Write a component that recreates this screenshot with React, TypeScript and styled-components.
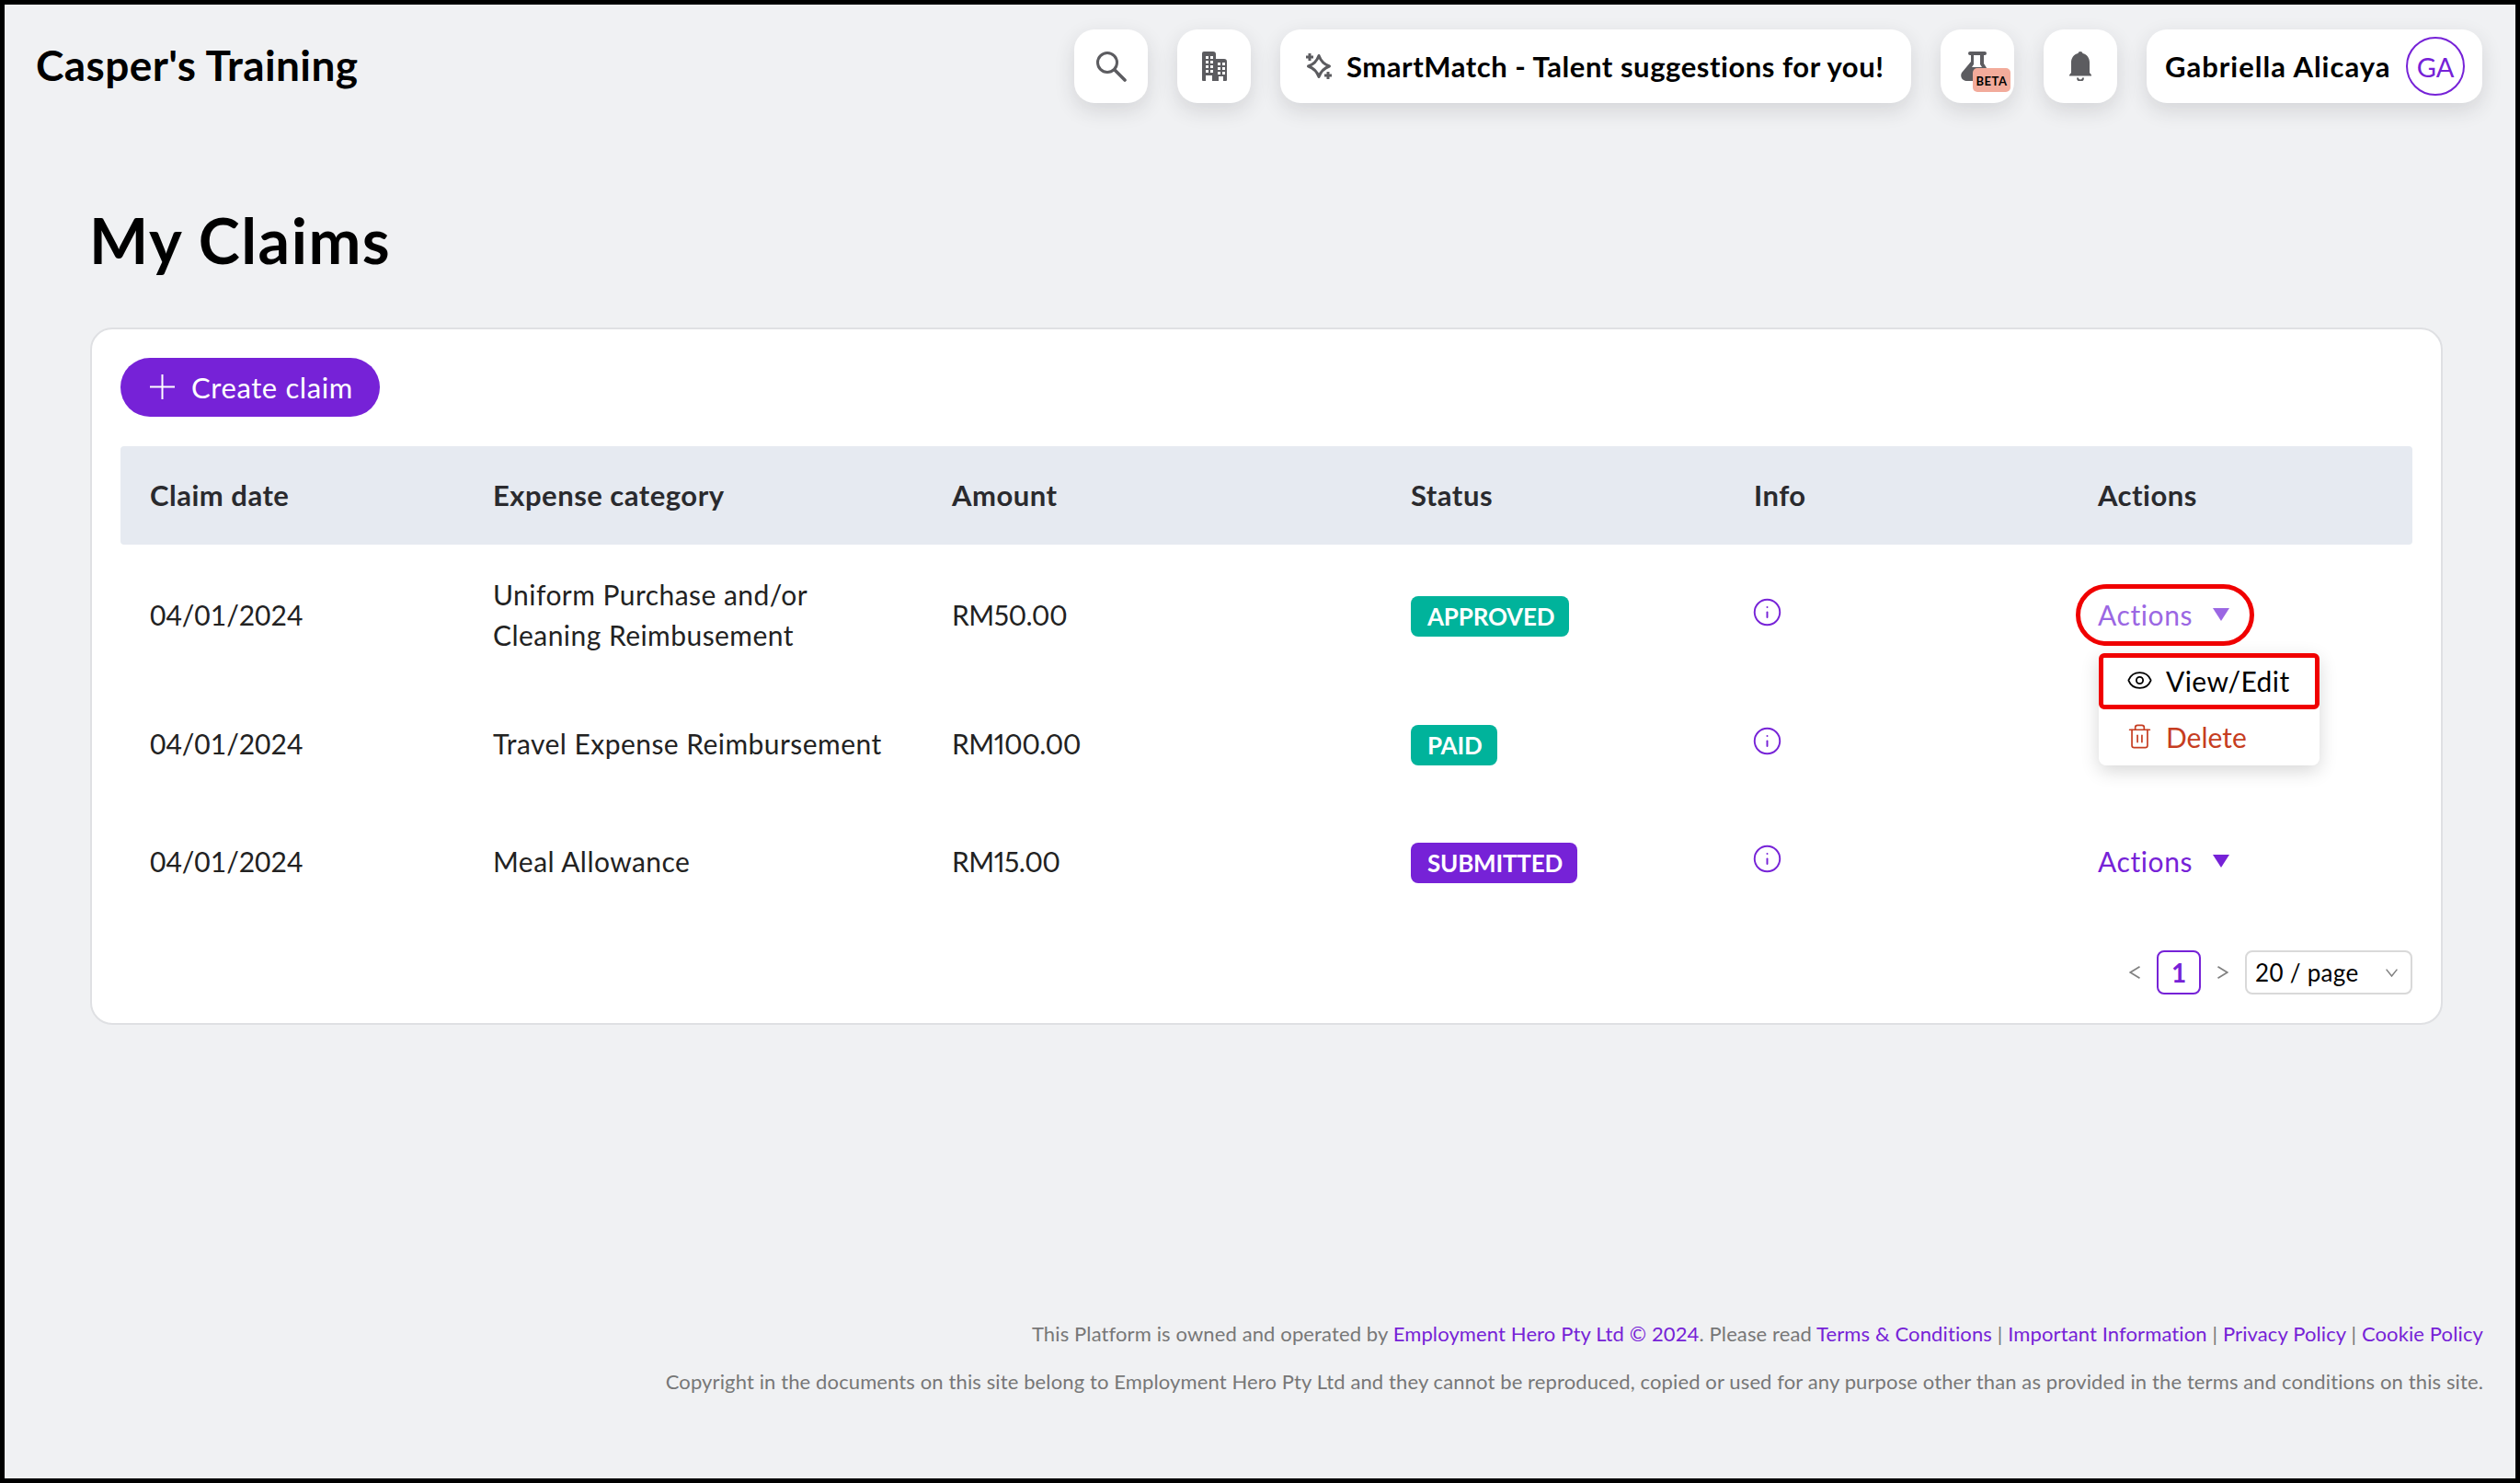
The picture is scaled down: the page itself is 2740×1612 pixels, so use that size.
import React from "react";
import styled, { createGlobalStyle } from "styled-components";
import { Eye, Info, Trash2 } from "lucide-react";

const PURPLE = "#7622d7";
const ICON_GREY = "#5c5c60";

type Claim = {
  date: string;
  category: React.ReactNode;
  amount: string;
  status: string;
  tone: "green" | "purple";
  actions: "open" | "closed" | "hidden";
};

const claims: Claim[] = [
  {
    date: "04/01/2024",
    category: (
      <>
        Uniform Purchase and/or
        <br />
        Cleaning Reimbusement
      </>
    ),
    amount: "RM50.00",
    status: "APPROVED",
    tone: "green",
    actions: "open",
  },
  {
    date: "04/01/2024",
    category: "Travel Expense Reimbursement",
    amount: "RM100.00",
    status: "PAID",
    tone: "green",
    actions: "hidden",
  },
  {
    date: "04/01/2024",
    category: "Meal Allowance",
    amount: "RM15.00",
    status: "SUBMITTED",
    tone: "purple",
    actions: "closed",
  },
];

const SearchIcon = () => (
  <svg width="34" height="34" viewBox="0 0 34 34" fill="none">
    <circle cx="13" cy="13" r="10.5" stroke={ICON_GREY} strokeWidth="3" />
    <path d="M21 21l11 11" stroke={ICON_GREY} strokeWidth="3.6" strokeLinecap="round" />
  </svg>
);

const BuildingIcon = () => (
  <svg width="27" height="32" viewBox="0 0 27 32">
    <path
      fillRule="evenodd"
      fill={ICON_GREY}
      d="M2 0h10a3 3 0 0 1 3 3v5h9a3 3 0 0 1 3 3v20a1 1 0 0 1-1 1H1a1 1 0 0 1-1-1V2a2 2 0 0 1 2-2zM4 5v3h3V5zM9 5v3h3V5zM4 10v3h3v-3zM9 10v3h3v-3zM4 15v3h3v-3zM9 15v3h3v-3zM4 20v3h3v-3zM9 20v3h3v-3zM4 26v6h7v-6zM17 12v3h3v-3zM22 12v3h3v-3zM17 17v3h3v-3zM22 17v3h3v-3zM17 22v3h3v-3zM22 22v3h3v-3zM18 27v5h5v-5z"
    />
  </svg>
);

const SparkIcon = () => (
  <svg width="28" height="28" viewBox="0 0 28 28" fill="none">
    <path
      d="M14 2.500Q17 11 25.500 14Q17 17 14 25.500Q11 17 2.500 14Q11 11 14 2.500z"
      stroke={ICON_GREY}
      strokeWidth="3"
      strokeLinejoin="round"
    />
    <path d="M4 0v8M0 4h8M24 20v8M20 24h8" stroke={ICON_GREY} strokeWidth="3" />
  </svg>
);

const FlaskIcon = () => (
  <svg width="30" height="32" viewBox="0 0 30 32">
    <path
      fill={ICON_GREY}
      d="M10 0h16a2 2 0 0 1 0 4h-1v9l5 8v11H6a6 6 0 0 1-5-9l10-12V4h-1a2 2 0 0 1 0-4z"
    />
    <path fill="#fff" d="M14 4h7v10l2 3H12l2-3z" />
  </svg>
);

const BellIcon = () => (
  <svg width="24" height="32" viewBox="0 0 24 32">
    <path
      fill={ICON_GREY}
      d="M12 0c1.400 0 2.300 0.800 2.500 2c4.600 1.100 7.500 4.900 7.500 10v11l2 2.500v1H0v-1l2-2.500V12C2 6.900 4.900 3.100 9.500 2C9.700 0.800 10.600 0 12 0z"
    />
    <path fill="none" stroke={ICON_GREY} strokeWidth="2" d="M9 28.500a3 3 0 0 0 6 0" />
  </svg>
);

const PlusIcon = () => (
  <svg width="27" height="27" viewBox="0 0 27 27" fill="none">
    <path d="M13.500 0v27M0 13.500h27" stroke="#fff" strokeWidth="2" />
  </svg>
);

const ChevronLeft = () => (
  <svg width="12" height="14" viewBox="0 0 12 14" fill="none">
    <path d="M11.500 0.800L1.200 7l10.300 6.200" stroke="#808080" strokeWidth="1.800" />
  </svg>
);

const ChevronRight = () => (
  <svg width="12" height="14" viewBox="0 0 12 14" fill="none">
    <path d="M0.500 0.800L10.800 7L0.500 13.200" stroke="#808080" strokeWidth="1.800" />
  </svg>
);

const ChevronDown = () => (
  <svg width="13" height="9" viewBox="0 0 13 9" fill="none">
    <path d="M0.600 0.600L6.500 8l5.900-7.400" stroke="#808080" strokeWidth="1.500" />
  </svg>
);

const ActionsButton = ({ open }: { open?: boolean }) => (
  <ActionsWrap>
    <ActionsLabel $open={open}>
      Actions
      <Caret />
    </ActionsLabel>
    {open && (
      <>
        <RedPill />
        <Menu>
          <MenuItem>
            <Eye size={29} strokeWidth={1.5} />
            View/Edit
            <RedBox />
          </MenuItem>
          <MenuItem $danger>
            <Trash2 size={29} strokeWidth={1.4} />
            Delete
          </MenuItem>
        </Menu>
      </>
    )}
  </ActionsWrap>
);

export default function App() {
  return (
    <Page>
      <GlobalStyle />
      <Header>
        <Brand>Casper's Training</Brand>
        <HeaderActions>
          <IconTile>
            <SearchIcon />
          </IconTile>
          <IconTile>
            <BuildingIcon />
          </IconTile>
          <SmartMatch>
            <SparkIcon />
            SmartMatch - Talent suggestions for you!
          </SmartMatch>
          <IconTile>
            <FlaskWrap>
              <FlaskIcon />
              <BetaBadge>BETA</BetaBadge>
            </FlaskWrap>
          </IconTile>
          <IconTile>
            <BellIcon />
          </IconTile>
          <Profile>
            Gabriella Alicaya
            <Avatar>GA</Avatar>
          </Profile>
        </HeaderActions>
      </Header>

      <Main>
        <Title>My Claims</Title>
        <Card>
          <CreateButton>
            <PlusIcon />
            Create claim
          </CreateButton>
          <HeadRow>
            <HeadCell>Claim date</HeadCell>
            <HeadCell>Expense category</HeadCell>
            <HeadCell>Amount</HeadCell>
            <HeadCell>Status</HeadCell>
            <HeadCell>Info</HeadCell>
            <HeadCell>Actions</HeadCell>
          </HeadRow>
          {claims.map((claim) => (
            <Row key={claim.status}>
              <Cell>{claim.date}</Cell>
              <Cell>
                <Category>{claim.category}</Category>
              </Cell>
              <Cell>
                <Amount>{claim.amount}</Amount>
              </Cell>
              <Cell>
                <Badge $tone={claim.tone}>{claim.status}</Badge>
              </Cell>
              <Cell>
                <InfoMark>
                  <Info size={33} strokeWidth={1.4} />
                </InfoMark>
              </Cell>
              <Cell>
                {claim.actions !== "hidden" && <ActionsButton open={claim.actions === "open"} />}
              </Cell>
            </Row>
          ))}
          <Pagination>
            <PageArrow>
              <ChevronLeft />
            </PageArrow>
            <PageNumber>1</PageNumber>
            <PageArrow>
              <ChevronRight />
            </PageArrow>
            <PageSize>
              20 / page
              <ChevronDown />
            </PageSize>
          </Pagination>
        </Card>
      </Main>

      <Footer>
        <FooterLine>
          This Platform is owned and operated by <FooterLink>Employment Hero Pty Ltd © 2024</FooterLink>. Please read{" "}
          <FooterLink>Terms &amp; Conditions</FooterLink> | <FooterLink>Important Information</FooterLink> |{" "}
          <FooterLink>Privacy Policy</FooterLink> | <FooterLink>Cookie Policy</FooterLink>
        </FooterLine>
        <FooterLine>
          Copyright in the documents on this site belong to Employment Hero Pty Ltd and they cannot be reproduced, copied
          or used for any purpose other than as provided in the terms and conditions on this site.
        </FooterLine>
      </Footer>
    </Page>
  );
}

const GlobalStyle = createGlobalStyle`
  html, body {
    margin: 0;
    padding: 0;
  }
  body {
    font-family: Lato, "Liberation Sans", sans-serif;
    color: #222;
  }
  * {
    box-sizing: border-box;
  }
`;

const Page = styled.div`
  width: 2740px;
  height: 1612px;
  border: 5px solid #000;
  background: #f0f1f3;
  display: flex;
  flex-direction: column;
  overflow: hidden;
`;

const Header = styled.header`
  display: flex;
  align-items: center;
  justify-content: space-between;
  padding: 27px 36px 0 34px;
`;

const Brand = styled.div`
  margin-bottom: 3px;
  font-size: 46px;
  font-weight: 700;
  letter-spacing: 0.4px;
  color: #000;
`;

const HeaderActions = styled.div`
  display: flex;
  gap: 32px;
`;

const Tile = styled.div`
  height: 80px;
  background: #fff;
  border-radius: 22px;
  box-shadow: 0 8px 22px rgba(40, 40, 50, 0.14);
  display: flex;
  align-items: center;
  color: #000;
  font-size: 31px;
  font-weight: 700;
`;

const IconTile = styled(Tile)`
  width: 80px;
  justify-content: center;
`;

const SmartMatch = styled(Tile)`
  width: 686px;
  padding-left: 28px;
  gap: 16px;
  letter-spacing: 0.55px;
  white-space: nowrap;
`;

const FlaskWrap = styled.div`
  position: relative;
  display: flex;
  margin-right: 6px;
`;

const BetaBadge = styled.span`
  position: absolute;
  left: 13px;
  top: 18px;
  width: 41px;
  height: 26px;
  border-radius: 5px;
  background: #f2ab9b;
  color: #000;
  font-size: 13px;
  font-weight: 700;
  letter-spacing: 0.5px;
  line-height: 28px;
  text-align: center;
`;

const Profile = styled(Tile)`
  width: 365px;
  padding: 0 19px 0 20px;
  justify-content: space-between;
  letter-spacing: 1px;
  white-space: nowrap;
`;

const Avatar = styled.span`
  width: 64px;
  height: 64px;
  border: 2px solid ${PURPLE};
  border-radius: 50%;
  color: ${PURPLE};
  font-size: 29px;
  font-weight: 400;
  letter-spacing: 0;
  display: flex;
  align-items: center;
  justify-content: center;
`;

const Main = styled.main`
  padding: 109px 79px 0 93px;
`;

const Title = styled.h1`
  margin: 0 0 55px -1px;
  font-size: 68px;
  line-height: 80px;
  font-weight: 700;
  letter-spacing: 1.5px;
  color: #000;
`;

const Card = styled.section`
  background: #fff;
  border: 2px solid #dfe0e3;
  border-radius: 24px;
  padding: 31px;
`;

const CreateButton = styled.button`
  width: 282px;
  height: 64px;
  margin-bottom: 32px;
  padding: 0 0 1px 32px;
  border: 0;
  border-radius: 32px;
  background: ${PURPLE};
  color: #fff;
  font: 400 31px Lato, sans-serif;
  letter-spacing: 0.6px;
  display: flex;
  align-items: center;
  gap: 18px;
`;

const columns = "373px 499px 499px 373px 374px 374px";

const HeadRow = styled.div`
  display: grid;
  grid-template-columns: ${columns};
  height: 107px;
  background: #e6eaf1;
  border-radius: 4px;
  align-items: center;
`;

const HeadCell = styled.div`
  padding: 0 0 2px 32px;
  font-size: 31px;
  font-weight: 700;
  letter-spacing: 0.5px;
  color: #2a2a2e;
`;

const Row = styled.div`
  display: grid;
  grid-template-columns: ${columns};
  padding: 32px 0;
  align-items: center;
`;

const Cell = styled.div`
  padding-left: 32px;
  min-height: 64px;
  display: flex;
  align-items: center;
  font-size: 30px;
  line-height: 44px;
  color: #222;
`;

const Category = styled.span`
  letter-spacing: 0.45px;
`;

const Amount = styled.span`
  font-variant-numeric: proportional-nums;
  letter-spacing: -0.5px;
`;

const Badge = styled.span<{ $tone: "green" | "purple" }>`
  height: 44px;
  margin-top: 3px;
  padding: 0 16px 0 18px;
  border-radius: 8px;
  background: ${({ $tone }) => ($tone === "green" ? "#00b39b" : PURPLE)};
  color: #fff;
  font-size: 26px;
  font-weight: 700;
  letter-spacing: -0.2px;
  line-height: 44px;
`;

const InfoMark = styled.span`
  display: flex;
  margin: 0 0 6px -2px;
  color: ${PURPLE};
`;

const ActionsWrap = styled.div`
  position: relative;
`;

const ActionsLabel = styled.div<{ $open?: boolean }>`
  display: flex;
  align-items: center;
  gap: 22px;
  height: 44px;
  letter-spacing: 0.6px;
  color: ${({ $open }) => ($open ? "#9b67e3" : PURPLE)};
`;

const Caret = styled.span`
  width: 0;
  height: 0;
  border-left: 9px solid transparent;
  border-right: 9px solid transparent;
  border-top: 14px solid currentColor;
`;

const RedPill = styled.span`
  position: absolute;
  left: -24px;
  top: -11px;
  width: 194px;
  height: 67px;
  border: 5px solid #f00000;
  border-radius: 34px;
`;

const Menu = styled.div`
  position: absolute;
  left: 1px;
  top: 64px;
  z-index: 2;
  width: 240px;
  height: 122px;
  background: #fff;
  border-radius: 8px;
  box-shadow: 0 6px 20px rgba(0, 0, 0, 0.16);
`;

const MenuItem = styled.div<{ $danger?: boolean }>`
  position: relative;
  height: 61px;
  padding: 0 0 2px 30px;
  display: flex;
  align-items: center;
  gap: 14px;
  letter-spacing: ${({ $danger }) => ($danger ? "0" : "0.4px")};
  color: ${({ $danger }) => ($danger ? "#c63d21" : "#000")};
`;

const RedBox = styled.span`
  position: absolute;
  inset: 0;
  border: 5px solid #f00000;
  border-radius: 6px;
`;

const Pagination = styled.div`
  display: flex;
  justify-content: flex-end;
  align-items: center;
  height: 48px;
  margin-top: 33px;
`;

const PageArrow = styled.span`
  width: 48px;
  display: flex;
  justify-content: center;
`;

const PageNumber = styled.span`
  width: 48px;
  height: 48px;
  border: 2px solid ${PURPLE};
  border-radius: 8px;
  color: ${PURPLE};
  font-size: 28px;
  font-weight: 700;
  display: flex;
  align-items: center;
  justify-content: center;
`;

const PageSize = styled.div`
  width: 182px;
  height: 48px;
  padding: 0 14px 0 9px;
  border: 2px solid #d9d9d9;
  border-radius: 8px;
  font-size: 26px;
  letter-spacing: 0.3px;
  color: #000;
  display: flex;
  align-items: center;
  justify-content: space-between;
`;

const Footer = styled.footer`
  margin-top: auto;
  padding: 0 35px 92px 0;
  display: flex;
  flex-direction: column;
  gap: 25px;
  text-align: right;
`;

const FooterLine = styled.div`
  font-size: 22px;
  line-height: 27px;
  letter-spacing: 0.12px;
  color: #777;
`;

const FooterLink = styled.span`
  color: ${PURPLE};
`;
